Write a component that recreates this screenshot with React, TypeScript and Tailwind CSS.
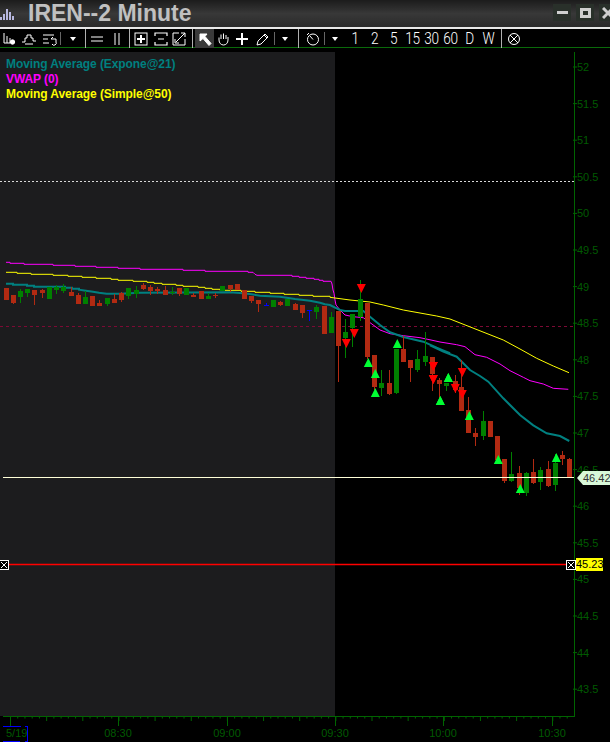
import React from 'react';

// [x, color, bodyTop, bodyBottom, wickTop, wickBottom] in crop coordinates, converted by the mappers below
type Candle = [number, string, number, number, number?, number?];

const first: Candle[] = [
  [19, 'r', 114, 150], [40, 'r', 135, 159, 135, 162], [61, 'g', 123, 141, 117, 159], [82, 'g', 117, 129, 117, 141],
  [103, 'r', 120, 135, 120, 165], [127, 'r', 120, 129, 117, 144], [148, 'g', 111, 147], [169, 'g', 111, 120, 105, 132],
  [190, 'g', 111, 123, 102, 129], [214, 'r', 126, 138, 111, 138], [235, 'r', 135, 162, 129, 162], [256, 'g', 141, 162, 123, 162],
  [277, 'r', 138, 168], [298, 'r', 159, 168, 150, 168], [322, 'g', 144, 162, 144, 168], [343, 'r', 147, 159, 132, 159],
  [364, 'r', 129, 150, 126, 156], [385, 'g', 114, 138, 114, 147], [409, 'g', 120, 132, 108, 144], [430, 'r', 105, 117, 99, 120],
  [451, 'r', 111, 123, 105, 135], [472, 'r', 117, 123, 111, 132], [496, 'r', 120, 135, 108, 135], [517, 'g', 126, 129, 111, 135],
  [538, 'r', 114, 132, 114, 138], [559, 'g', 114, 135], [580, 'r', 135, 141, 129, 141], [604, 'r', 123, 147],
  [625, 'g', 138, 147, 129, 147], [646, 'r', 135, 137, 129, 144], [667, 'g', 108, 123], [691, 'r', 105, 117, 105, 126],
  [712, 'r', 102, 120], [733, 'r', 120, 147], [754, 'r', 138, 153, 138, 159], [775, 'r', 150, 162, 150, 186],
  [799, 'b', 165, 166, 159, 168], [820, 'g', 150, 171], [841, 'r', 156, 165, 153, 168], [862, 'g', 147, 168],
  [886, 'r', 162, 180, 159, 180], [907, 'r', 165, 189, 165, 204], [928, 'b', 180, 181, 180, 213], [949, 'g', 171, 186, 165, 207],
];

const second: Candle[] = [
  [13, 'r', 93, 177], [34, 'g', 126, 174, 110, 174], [55, 'r', 108, 213, 108, 321], [76, 'g', 171, 189, 132, 249],
  [97, 'g', 117, 159, 117, 216], [121, 'g', 72, 126, 15, 138], [142, 'r', 84, 246, 84, 252], [163, 'r', 240, 336, 240, 345],
  [184, 'g', 324, 339, 285, 363], [208, 'r', 324, 357, 285, 360], [229, 'g', 222, 354, 222, 357], [250, 'r', 222, 261, 183, 261],
  [271, 'r', 255, 279, 255, 321], [292, 'g', 252, 285, 225, 291], [316, 'g', 243, 261, 171, 273], [337, 'r', 246, 297, 246, 348],
  [358, 'r', 315, 327, 309, 369],
];

const third: Candle[] = [
  [58, 'r', 120, 132, 114, 168], [79, 'g', 129, 138, 129, 153], [106, 'r', 123, 150, 105, 160], [124, 'r', 140, 213, 60, 213],
  [145, 'r', 210, 279, 171, 279], [166, 'r', 279, 291, 264, 318], [190, 'g', 243, 288, 213, 300], [211, 'r', 243, 291],
  [232, 'r', 288, 360], [253, 'r', 357, 423, 357, 429], [274, 'g', 402, 423, 336, 426], [298, 'r', 399, 444, 378, 465],
  [319, 'g', 399, 459, 396, 468], [340, 'r', 396, 429, 357, 432], [361, 'g', 390, 426, 381, 450], [385, 'r', 387, 438, 363, 441],
  [406, 'g', 369, 435, 342, 453], [427, 'r', 345, 357, 333, 375], [448, 'r', 357, 414, 354, 414],
];

const mapA = (x: number, y: number): [number, number] => [x / 3, 250 + y / 3];
const mapB = (x: number, y: number): [number, number] => [320 + x / 3, 275 + y / 3];
const mapC = (x: number, y: number): [number, number] => [420 + x / 3, 340 + y / 3];

const magenta = [
  ...[[18,37],[30,37],[30,40],[72,40],[72,43],[159,43],[159,46],[225,46],[225,49],[288,49],[288,52],[354,52],[354,55],[420,55],[420,58],[549,58],[549,61],[615,61],[615,64],[744,64],[744,67],[759,67],[765,73],[771,76],[876,76],[876,79],[897,79],[897,82],[918,82],[918,85],[942,85],[942,88],[957,88],[957,91],[969,91],[969,94],[993,94],[996,102],[999,120],[1002,130],[1005,150],[1008,165]].map(([x, y]) => mapA(x, y)),
  ...[[60,105],[75,120],[100,125],[130,128],[180,165],[210,176],[250,182],[300,188]].map(([x, y]) => mapB(x, y)),
  ...[[33,0],[60,6],[110,14],[135,20],[165,44],[200,52],[240,72],[270,92],[310,112],[330,122],[370,132],[400,145],[445,148]].map(([x, y]) => mapC(x, y)),
];

const yellow = [
  ...[[18,67],[51,67],[51,70],[93,70],[93,73],[159,73],[159,76],[204,76],[204,79],[246,79],[246,82],[288,82],[288,85],[333,85],[333,88],[354,88],[354,91],[399,91],[399,94],[441,94],[441,97],[462,97],[462,100],[486,100],[486,103],[528,103],[528,106],[549,106],[549,109],[594,109],[594,112],[615,112],[615,115],[636,115],[636,118],[660,118],[660,121],[723,121],[723,124],[765,124],[765,127],[810,127],[810,130],[852,130],[852,133],[897,133],[897,136],[939,136],[939,139],[990,139],[990,142]].map(([x, y]) => mapA(x, y)),
  ...[[45,69],[90,75],[150,81],[190,90],[250,105],[300,114],[350,123],[390,132]].map(([x, y]) => mapB(x, y)),
  ...[[250,0],[300,27],[350,55],[400,78],[447,98]].map(([x, y]) => mapC(x, y)),
];

const teal = [
  ...[[18,101],[39,101],[39,104],[81,104],[81,107],[102,107],[102,110],[195,110],[195,113],[216,113],[216,116],[237,116],[237,119],[258,122],[279,125],[297,128],[320,131],[360,131],[420,128],[690,127],[720,129],[750,132],[780,137],[840,140],[885,147],[930,152],[960,158],[975,163]].map(([x, y]) => mapA(x, y)),
  ...[[30,90],[60,105],[75,108],[130,108],[150,125],[180,150],[210,172],[250,186],[310,200],[350,218],[390,235]].map(([x, y]) => mapB(x, y)),
  ...[[30,16],[70,35],[110,50],[150,90],[180,108],[205,125],[250,175],[300,225],[340,256],[380,280],[420,288],[448,303]].map(([x, y]) => mapC(x, y)),
];

const downs = [
  mapB(124, 27), mapB(79, 192), mapB(103, 162), mapB(340, 261), mapB(340, 300),
  mapC(40, 66), mapC(40, 105), mapC(127, 84), mapC(106, 132), mapC(127, 150),
];
const ups = [
  mapB(145, 276), mapB(166, 309), mapB(166, 366), mapB(232, 219), mapB(361, 390), mapB(385, 321),
  mapC(61, 195), mapC(85, 126), mapC(148, 240), mapC(235, 372), mapC(301, 459), mapC(409, 366),
];

const prices = ['52', '51.5', '51', '50.5', '50', '49.5', '49', '48.5', '48', '47.5', '47', '46.5', '46', '45.5', '45', '44.5', '44', '43.5'];
const times = [
  { x: 118, label: '08:30' },
  { x: 227, label: '09:00' },
  { x: 335, label: '09:30' },
  { x: 443, label: '10:00' },
  { x: 552, label: '10:30' },
];
const AXIS = '#006400';
const AXIS_TEXT = '#005a00';

const toPoints = (pts: [number, number][]) => pts.map(([x, y]) => `${x.toFixed(1)},${y.toFixed(1)}`).join(' ');

function CandleMark({ c, map }: { c: Candle; map: (x: number, y: number) => [number, number] }) {
  const [x, kind, top, bottom, wt, wb] = c;
  const color = kind === 'r' ? '#b22a12' : kind === 'g' ? '#008000' : '#0000ff';
  const [px, py] = map(x, top);
  const [, pb] = map(x, bottom);
  const [, wy] = map(x, wt ?? top);
  const [, wz] = map(x, wb ?? bottom);
  const left = Math.round(px - 2.5);
  return (
    <g shapeRendering="crispEdges">
      <rect x={left + 2} y={wy} width={1} height={wz - wy} fill={color} />
      <rect x={left} y={py} width={5} height={kind === 'b' ? 1 : Math.max(1, pb - py)} fill={color} />
    </g>
  );
}

function ChartDrawing() {
  return (
    <svg viewBox="0 52 610 690" className="absolute inset-0 w-[610px] h-[690px] font-['Liberation_Sans',sans-serif]">
      <line x1={0} x2={574} y1={181.5} y2={181.5} stroke="#d8d8d8" strokeDasharray="2 2" />
      <line x1={0} x2={574} y1={326.5} y2={326.5} stroke="#7c0a34" strokeDasharray="3 3" />

      <polyline points={toPoints(magenta)} fill="none" stroke="#ff00ff" strokeWidth={1} />
      <polyline points={toPoints(yellow)} fill="none" stroke="#ffff00" strokeWidth={1} />
      <polyline points={toPoints(teal)} fill="none" stroke="#008080" strokeWidth={2} />

      {first.map((c) => <CandleMark key={`a${c[0]}`} c={c} map={mapA} />)}
      {second.map((c) => <CandleMark key={`b${c[0]}`} c={c} map={mapB} />)}
      {third.map((c) => <CandleMark key={`c${c[0]}`} c={c} map={mapC} />)}

      {downs.map(([x, y]) => <polygon key={`d${x}${y}`} points={`${x - 4.5},${y} ${x + 4.5},${y} ${x},${y + 9}`} fill="#ff0000" />)}
      {ups.map(([x, y]) => <polygon key={`u${x}${y}`} points={`${x - 4.5},${y} ${x + 4.5},${y} ${x},${y - 9}`} fill="#00ff33" />)}

      <line x1={3} x2={574} y1={477.5} y2={477.5} stroke="#ffffd8" />
      <line x1={8} x2={566} y1={564.5} y2={564.5} stroke="#ff0000" strokeWidth={1.4} />

      {/* price axis */}
      <line x1={574.5} x2={574.5} y1={52} y2={716} stroke={AXIS} />
      {prices.map((p, i) => {
        const y = 67 + i * 36.6;
        return (
          <g key={p}>
            <line x1={573} x2={577} y1={y} y2={y} stroke={AXIS} />
            <text x={577} y={y + 4} fontSize={11} fill={AXIS_TEXT}>{p}</text>
          </g>
        );
      })}

      {/* time axis */}
      <line x1={3} x2={575} y1={716.5} y2={716.5} stroke={AXIS} />
      {Array.from({ length: 80 }, (_, i) => 10.5 + i * 7.23).filter((x) => x < 574).map((x, i) => (
        <line key={x} x1={x} x2={x} y1={716} y2={i % 5 === 0 ? 721 : 718.5} stroke={AXIS} />
      ))}
      <line x1={10.5} x2={10.5} y1={716} y2={726} stroke={AXIS} />
      {times.map((t) => (
        <g key={t.label}>
          <line x1={t.x + 0.5} x2={t.x + 0.5} y1={716} y2={726} stroke={AXIS} />
          <text x={t.x} y={737} fontSize={11} textAnchor="middle" fill={AXIS_TEXT}>{t.label}</text>
        </g>
      ))}
      <text x={6} y={737} fontSize={11} fill={AXIS_TEXT}>5/19</text>
      <g shapeRendering="crispEdges" stroke="#0000ff">
        <line x1={3} x2={21} y1={726.5} y2={726.5} />
        <line x1={3} x2={20} y1={741.5} y2={741.5} />
        <line x1={27.5} x2={27.5} y1={726} y2={742} />
        <line x1={25} x2={28} y1={726.5} y2={726.5} />
        <line x1={25} x2={28} y1={741.5} y2={741.5} />
      </g>
    </svg>
  );
}

function XBox({ className }: { className: string }) {
  return (
    <svg viewBox="0 0 10 10" className={`absolute w-[10px] h-[10px] ${className}`} shapeRendering="crispEdges">
      <rect x={0.5} y={0.5} width={9} height={9} fill="#000" stroke="#fff" />
      <path d="M2 2 L8 8" stroke="#fff" />
      <path d="M8 2 L2 8" stroke="#fff" />
    </svg>
  );
}

function Icon({ w, children, active }: { w: number; children: React.ReactNode; active?: boolean }) {
  return (
    <div className={`h-[19px] flex items-center justify-center shrink-0 ${active ? 'bg-[#3a3a3a]' : ''}`} style={{ width: w }}>
      <svg viewBox="0 0 14 14" className="w-[14px] h-[14px]" fill="none" stroke="#fff" strokeWidth={1}>
        {children}
      </svg>
    </div>
  );
}

const Gap = ({ w }: { w: number }) => <div className="h-[19px] shrink-0" style={{ width: w }} />;

const Sep = ({ bright }: { bright?: boolean }) => (
  <div className={`w-px h-[19px] shrink-0 ${bright ? 'bg-[#b0b0b0]' : 'py-[3px]'}`}>
    {!bright && <div className="w-px h-[13px] bg-[#666]" />}
  </div>
);

const Arrow = ({ w }: { w: number }) => (
  <div className="h-[19px] flex items-center justify-center shrink-0" style={{ width: w }}>
    <div className="w-0 h-0 border-x-[3.5px] border-x-transparent border-t-[4px] border-t-white" />
  </div>
);

function Frame({ w, label }: { w: number; label: string }) {
  return (
    <div
      className="h-[19px] flex items-center justify-center shrink-0 text-white font-light text-[17px] tracking-[-0.5px] scale-x-[0.8] font-['Roboto',sans-serif]"
      style={{ width: w }}
    >
      {label}
    </div>
  );
}

function Toolbar() {
  return (
    <div className="h-[21px] border-t-2 border-t-[#e8e8e8] border-b border-b-[#0a6a0a] bg-black flex items-start">
      <Icon w={18}>
        <path d="M2 1v10M2 11h6M5 4v7M8 6v5" /><circle cx="10.5" cy="10" r="2.2" fill="#fff" />
      </Icon>
      <Icon w={21}>
        <path d="M0 10h3V6h2V3h4v3h2v3h3" /><path d="M3 12h8" />
      </Icon>
      <Icon w={21}>
        <path d="M0 3h11M0 7h5M0 11h6" /><path d="M8 7h5v3a2 2 0 0 1-4 2" /><path d="M8 7l2-2" />
      </Icon>
      <Sep />
      <Arrow w={24} />
      <Sep bright />
      <Icon w={22}><path d="M1 5h12M1 9h12" /></Icon>
      <Icon w={17}><path d="M5 1v12M9 1v12" /></Icon>
      <Gap w={4} />
      <Sep bright />
      <Icon w={22}><rect x="1" y="1" width="12" height="12" /><path d="M7 3v8M3 7h8" strokeWidth={2} /></Icon>
      <Icon w={18}><path d="M1 4V1h12v3M1 10v3h12v-3M4 7h6" strokeWidth={1.2} /></Icon>
      <Icon w={18}><path d="M7 1H1v12h12V7M13 1L4 10M9 1h4v4M3 7v4h4" /></Icon>
      <Gap w={4} />
      <Sep bright />
      <Gap w={2} />
      <Icon w={19} active>
        <path d="M2 2h7L7 4.5l6 7-2 2-6-7L2 9z" fill="#fff" />
      </Icon>
      <Icon w={18}>
        <path d="M3 8V5.5M5 7V2.5M7.5 7V1.5M10 7V3M12 8V5M3 8c0 3 2 5 4.5 5S12 11 12 8" />
      </Icon>
      <Icon w={20}><path d="M7 1v12M1 7h12" strokeWidth={2} /></Icon>
      <Icon w={22}><path d="M1 13l1-4 7-7 3 3-7 7zM8 3l3 3" /></Icon>
      <Sep />
      <Arrow w={20} />
      <Gap w={3} />
      <Sep bright />
      <Gap w={2} />
      <Icon w={23}><circle cx="7" cy="7.5" r="5.5" /><path d="M7 7.5L4 4M1 3l2-2" /></Icon>
      <Sep />
      <Arrow w={20} />
      <Frame w={20} label="1" />
      <Frame w={19} label="2" />
      <Frame w={19} label="5" />
      <Frame w={19} label="15" />
      <Frame w={19} label="30" />
      <Frame w={19} label="60" />
      <Frame w={19} label="D" />
      <Frame w={19} label="W" />
      <Gap w={3} />
      <Sep bright />
      <Icon w={23}><circle cx="7" cy="7" r="5.5" /><path d="M3 3l8 8M11 3l-8 8" /></Icon>
    </div>
  );
}

function TitleBar() {
  return (
    <div className="h-[27px] bg-gradient-to-b from-[#1c1c1c] via-[#383838] to-[#2a2a2a] flex items-center overflow-hidden relative">
      <svg viewBox="0 0 14 12" className="w-[14px] h-[12px] shrink-0 mt-[1px]">
        <path d="M0 12V9h2v3zM3 12V6h2v6zM6 12V1h2v11zM9 12V4h2v8zM12 12V8h2v4z" fill="#b8b8e0" />
      </svg>
      <span className="ml-[14px] text-[23px] font-bold text-[#c0c0c0] leading-none whitespace-nowrap font-['Liberation_Sans',sans-serif]">
        IREN--2 Minute
      </span>
      <div className="ml-auto flex gap-[5px] mr-[-7px] mt-[-2px]">
        <div className="w-[18px] h-[17px] bg-[#29302a] flex items-center justify-center">
          <div className="w-[11px] h-[3px] bg-[#cfcfcf]" />
        </div>
        <div className="w-[18px] h-[17px] bg-[#29302a] flex items-center justify-center">
          <div className="w-[11px] h-[10px] border-[3px] border-[#cfcfcf]" />
        </div>
        <div className="w-[18px] h-[17px] bg-[#29302a] flex items-center justify-center">
          <svg viewBox="0 0 12 12" className="w-[12px] h-[12px]">
            <path d="M1 1l10 10M11 1L1 11" stroke="#cfcfcf" strokeWidth={3} />
          </svg>
        </div>
      </div>
    </div>
  );
}

export default function App() {
  return (
    <div className="w-[610px] h-[742px] bg-black flex flex-col overflow-hidden">
      <TitleBar />
      <Toolbar />
      <div className="h-[4px] bg-black" />
      <div className="relative flex-1">
        <div className="h-[664px] w-[335px] bg-[#1c1c1e]" />
        <ChartDrawing />

        <div className="absolute left-[6px] top-[5px] text-[12px] tracking-[-0.08px] font-bold leading-[15px] font-['Liberation_Sans',sans-serif]">
          <div className="text-[#008080]">Moving Average (Expone@21)</div>
          <div className="text-[#ff00ff]">VWAP (0)</div>
          <div className="text-[#ffff00]">Moving Average (Simple@50)</div>
        </div>

        <div className="absolute left-[576px] top-[506px] w-[27px] h-[13px] bg-[#ffff00] text-black text-[11px] leading-[13px] text-center font-['Liberation_Sans',sans-serif]">
          45.23
        </div>
        <XBox className="left-[-1px] top-[508px]" />
        <XBox className="left-[566px] top-[508px]" />

        <div className="absolute left-[577px] top-[419px] h-[14px] w-[33px] flex items-center">
          <div className="w-0 h-0 border-y-[7px] border-y-transparent border-r-[6px] border-r-[#d8f8d8]" />
          <div className="h-[14px] flex-1 bg-[#d8f8d8] text-[#333] text-[11px] leading-[14px] font-['Liberation_Sans',sans-serif]">46.42</div>
        </div>
      </div>
    </div>
  );
}
